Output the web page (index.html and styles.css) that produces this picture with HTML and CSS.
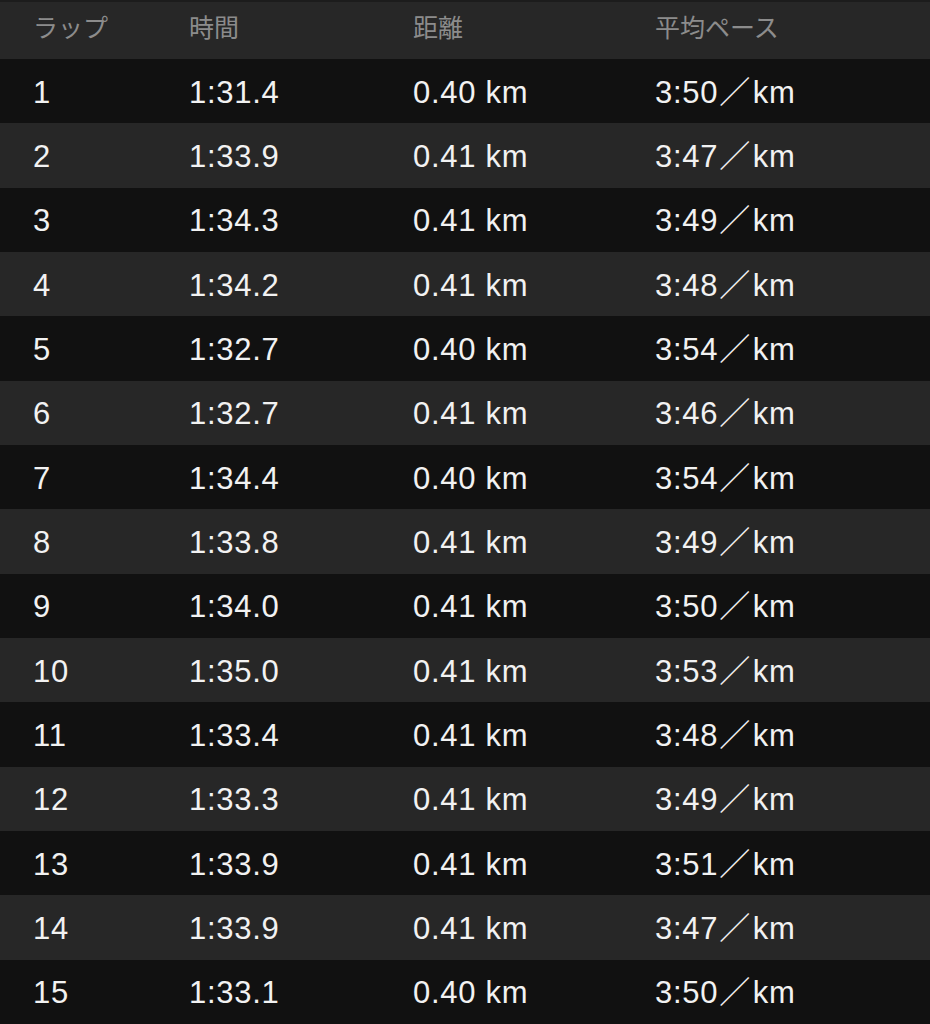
FILE: index.html
```html
<!DOCTYPE html>
<html lang="ja">
<head>
<meta charset="utf-8">
<link rel="stylesheet" href="styles.css">
</head>
<body>
<div class="table">
  <div class="row head"><div>ラップ</div><div>時間</div><div>距離</div><div>平均ペース</div></div>
  <div class="row"><div>1</div><div>1:31.4</div><div>0.40 km</div><div>3:50<span class="sl">／</span>km</div></div>
  <div class="row"><div>2</div><div>1:33.9</div><div>0.41 km</div><div>3:47<span class="sl">／</span>km</div></div>
  <div class="row"><div>3</div><div>1:34.3</div><div>0.41 km</div><div>3:49<span class="sl">／</span>km</div></div>
  <div class="row"><div>4</div><div>1:34.2</div><div>0.41 km</div><div>3:48<span class="sl">／</span>km</div></div>
  <div class="row"><div>5</div><div>1:32.7</div><div>0.40 km</div><div>3:54<span class="sl">／</span>km</div></div>
  <div class="row"><div>6</div><div>1:32.7</div><div>0.41 km</div><div>3:46<span class="sl">／</span>km</div></div>
  <div class="row"><div>7</div><div>1:34.4</div><div>0.40 km</div><div>3:54<span class="sl">／</span>km</div></div>
  <div class="row"><div>8</div><div>1:33.8</div><div>0.41 km</div><div>3:49<span class="sl">／</span>km</div></div>
  <div class="row"><div>9</div><div>1:34.0</div><div>0.41 km</div><div>3:50<span class="sl">／</span>km</div></div>
  <div class="row"><div>10</div><div>1:35.0</div><div>0.41 km</div><div>3:53<span class="sl">／</span>km</div></div>
  <div class="row"><div>11</div><div>1:33.4</div><div>0.41 km</div><div>3:48<span class="sl">／</span>km</div></div>
  <div class="row"><div>12</div><div>1:33.3</div><div>0.41 km</div><div>3:49<span class="sl">／</span>km</div></div>
  <div class="row"><div>13</div><div>1:33.9</div><div>0.41 km</div><div>3:51<span class="sl">／</span>km</div></div>
  <div class="row"><div>14</div><div>1:33.9</div><div>0.41 km</div><div>3:47<span class="sl">／</span>km</div></div>
  <div class="row"><div>15</div><div>1:33.1</div><div>0.40 km</div><div>3:50<span class="sl">／</span>km</div></div>
</div>
</body>
</html>
```
FILE: styles.css
```css
html, body {
  margin: 0;
  padding: 0;
  background: #111111;
}
body {
  font-family: "Liberation Sans", "Noto Sans CJK JP", sans-serif;
  color: #f2f2f2;
  width: 930px;
  height: 1024px;
  overflow: hidden;
}
.table {
  display: flex;
  flex-direction: column;
}
.row {
  box-sizing: border-box;
  display: grid;
  grid-template-columns: 156px 224px 242px 1fr;
  align-items: center;
  padding-left: 33px;
  padding-top: 3px;
  height: 64.33px;
  font-size: 31px;
  line-height: 36px;
  letter-spacing: 0.7px;
  background: #111111;
}
.row:nth-child(odd) {
  background: #272727;
}
.sl {
  line-height: 0;
  margin: 0 2px 0 1px;
}
.row.head {
  height: 59px;
  padding-top: 0;
  padding-bottom: 5px;
  border-top: 2px solid #1c1c1c;
  background: #272727;
  color: #8c8c8c;
  font-size: 25px;
  letter-spacing: 0;
}
```
